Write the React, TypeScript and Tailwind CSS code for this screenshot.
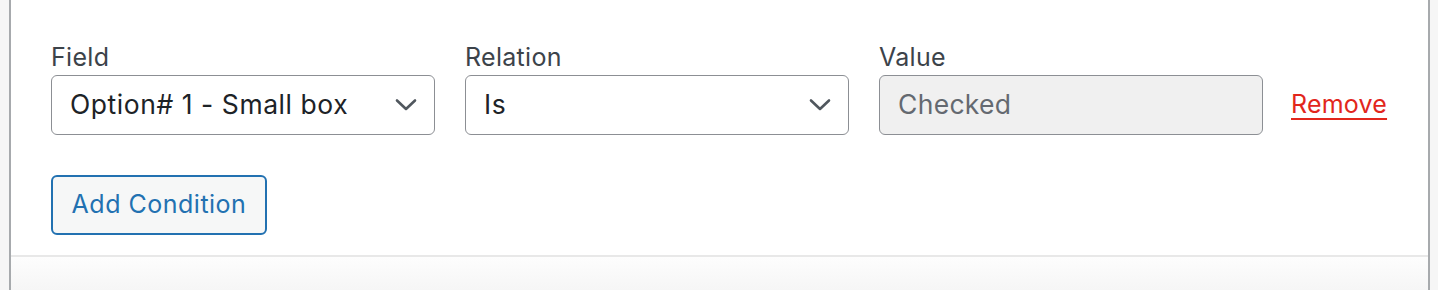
interface SelectProps {
  label: string
  value: string
}

function Chevron() {
  return (
    <svg width="22" height="14" viewBox="0 0 22 14" fill="none" className="shrink-0">
      <path d="M2 2.5 L11 11 L20 2.5" stroke="#50575e" strokeWidth="2.6" strokeLinecap="round" strokeLinejoin="round" />
    </svg>
  )
}

function SelectField({ label, value }: SelectProps) {
  return (
    <div className="flex flex-col w-[384px]">
      <span className="text-[25px] leading-[30px] tracking-[0.3px] text-[#3c434a] mb-[3px]">{label}</span>
      <div className="h-[60px] rounded-[6px] border-[1.5px] border-[#8c8f94] bg-white flex items-center justify-between pl-[18px] pr-[17px]">
        <span className="text-[26.5px] tracking-[0.55px] text-[#1d2327]">{value}</span>
        <Chevron />
      </div>
    </div>
  )
}

export default function App() {
  return (
    <div className="h-[290px] bg-[#f6f6f6] pl-[9px] pr-[8px] font-['Inter','Noto_Sans',sans-serif]">
      <div className="h-full bg-white border-l-2 border-r-2 border-[#a7aaad] flex flex-col">
        <div className="pl-[40px] pt-[42px] pb-[20px]">
          <div className="flex items-end gap-[30px]">
            <SelectField label="Field" value="Option# 1 - Small box" />
            <SelectField label="Relation" value="Is" />
            <div className="flex flex-col w-[384px]">
              <span className="text-[25px] leading-[30px] tracking-[0.3px] text-[#3c434a] mb-[3px]">Value</span>
              <div className="h-[60px] rounded-[6px] border-[1.5px] border-[#8c8f94] bg-[#f0f0f0] flex items-center pl-[18px]">
                <span className="text-[26.5px] tracking-[0.3px] text-[#646970]">Checked</span>
              </div>
            </div>
            <a href="#" className="-ml-[2px] mb-[18px] text-[25px] leading-none tracking-[0.2px] text-[#e2261c] underline underline-offset-[5px] decoration-2">
              Remove
            </a>
          </div>
          <button className="mt-[40px] h-[60px] w-[216px] rounded-[6px] border-2 border-[#2271b1] bg-[#f6f7f7] text-[25px] tracking-[0.5px] text-[#2271b1]">
            Add Condition
          </button>
        </div>
        <div className="border-t-2 border-[#e8e8e8] flex-1 bg-gradient-to-b from-[#fdfdfd] to-[#f6f6f6]" />
      </div>
    </div>
  )
}
